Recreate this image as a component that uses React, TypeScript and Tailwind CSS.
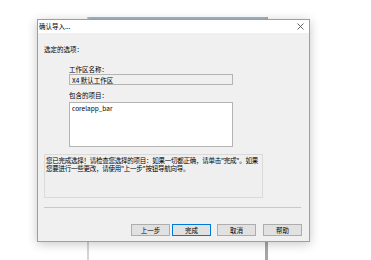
export default function App() {
  const font = { fontFamily: '"Noto Sans CJK SC", "Noto Sans", sans-serif' };

  return (
    <div className="relative w-[371px] h-[260px] bg-white overflow-hidden" style={font}>
      {/* window behind the dialog */}
      <div className="absolute left-[87px] top-[17px] w-[181px] h-[260px] border-t-2 border-t-[#a3b6c8] border-l-2 border-l-[#d4d4d4] border-r-[3px] border-r-[#a6a6a6]" />

      {/* dialog */}
      <div className="relative z-10 ml-[37px] mt-[19px] w-[273px] h-[223px] border border-[#78a6d8] bg-[#f0f0f0] shadow-[0_2px_10px_rgba(0,0,0,0.22)] flex flex-col text-black">
        <div className="h-[13px] bg-white flex items-center justify-between pl-[1px] pr-[5px]">
          <span className="text-[6.5px] leading-none">确认导入...</span>
          <svg width="7" height="7" viewBox="0 0 7 7" className="text-[#555]">
            <path d="M0.5 0.5 L6.5 6.5 M6.5 0.5 L0.5 6.5" stroke="currentColor" strokeWidth="0.9" fill="none" />
          </svg>
        </div>

        <div className="flex flex-col pl-[6px] text-[6.5px] leading-[8px]">
          <div className="mt-[12px]">选定的选项：</div>

          <div className="ml-[25px] mt-[12px]">工作区名称：</div>
          <div className="ml-[25px] mt-[1px] w-[164px] h-[11px] border border-[#b4b4b4] bg-[#f0f0f0] pl-[2px] flex items-center">
            X4 默认工作区
          </div>

          <div className="ml-[25px] mt-[6px]">包含的项目：</div>
          <div className="ml-[25px] mt-[3px] w-[164px] h-[45px] border border-[#b4b4b4] bg-white px-[2px] pt-[1px]">
            corelapp_bar
          </div>

          <div className="mt-[7px] w-[219px] h-[44px] border border-[#dadada] bg-[#efefef] pl-[1px] pr-0 pt-[1px] tracking-[-0.25px]">
            您已完成选择！请检查您选择的项目：如果一切都正确，请单击"完成"。如果您要进行一些更改，请使用"上一步"按钮导航向导。
          </div>

          <div className="mt-[9px] w-[257px] h-px bg-[#c8c8c8]" />

          <div className="mt-[16px] flex">
            <button className="ml-[87px] w-[39px] h-[12px] border border-[#adadad] bg-[#e1e1e1] flex items-center justify-center text-[6.5px] leading-none">
              上一步
            </button>
            <button className="ml-[2px] w-[39px] h-[12px] border border-[#0078d7] bg-[#e1e1e1] flex items-center justify-center text-[6.5px] leading-none">
              完成
            </button>
            <button className="ml-[6px] w-[39px] h-[12px] border border-[#adadad] bg-[#e1e1e1] flex items-center justify-center text-[6.5px] leading-none">
              取消
            </button>
            <button className="ml-[7px] w-[39px] h-[12px] border border-[#adadad] bg-[#e1e1e1] flex items-center justify-center text-[6.5px] leading-none">
              帮助
            </button>
          </div>
        </div>
      </div>
    </div>
  );
}
